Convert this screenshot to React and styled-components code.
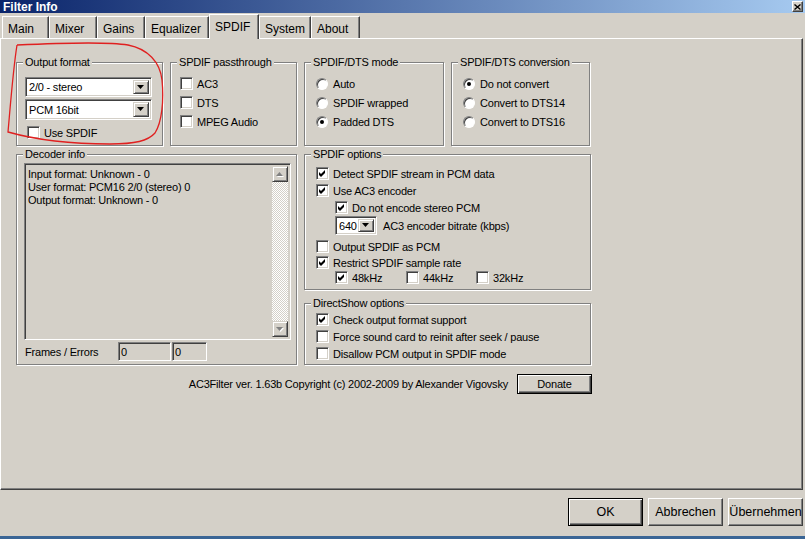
import React from 'react';
import styled, { createGlobalStyle } from 'styled-components';

const GlobalStyle = createGlobalStyle`
  html, body {
    margin: 0;
    padding: 0;
    background: #d4d0c8;
  }
  body {
    font-family: "Liberation Sans", Arial, sans-serif;
  }
`;

const Window = styled.div`
  position: relative;
  width: 805px;
  height: 539px;
  overflow: hidden;
  background: #d4d0c8;
  display: flex;
  flex-direction: column;
  font-family: "Liberation Sans", Arial, sans-serif;
  font-size: 11px;
  letter-spacing: -0.2px;
  color: #000;
`;

const TitleBar = styled.div`
  flex: none;
  height: 13px;
  display: flex;
  align-items: center;
  justify-content: space-between;
  padding: 0 2px 0 3px;
  background: linear-gradient(to right, #0a246a, #a6caf0);
  color: #fff;
  font-size: 12px;
  font-weight: bold;
  letter-spacing: 0;
`;

const CloseBtn = styled.span`
  box-sizing: border-box;
  width: 11px;
  height: 11px;
  background: #d4d0c8;
  border: 1px solid;
  border-color: #fff #404040 #404040 #fff;
  box-shadow: inset -1px -1px 0 #808080;
  display: flex;
  align-items: center;
  justify-content: center;
`;

const TabStrip = styled.div`
  flex: none;
  position: relative;
  z-index: 1;
  height: 25px;
  display: flex;
  align-items: flex-end;
  padding-left: 2px;
`;

const Tab = styled.div`
  box-sizing: border-box;
  width: ${p => p.w}px;
  height: ${p => (p.active ? 25 : 22)}px;
  margin-bottom: ${p => (p.active ? -1 : 0)}px;
  padding: ${p => (p.active ? 0 : 2)}px 0 0 5px;
  display: flex;
  align-items: center;
  background: #d4d0c8;
  border-top: 1px solid #fff;
  border-left: 1px solid #fff;
  border-right: 1px solid #404040;
  box-shadow: inset -1px 0 0 #808080;
  font-size: 12px;
  letter-spacing: 0;
  white-space: nowrap;
`;

const Panel = styled.div`
  flex: none;
  box-sizing: border-box;
  width: 803px;
  height: 452px;
  border-top: 1px solid #fff;
  border-left: 1px solid #fff;
  border-right: 1px solid #404040;
  border-bottom: 1px solid #404040;
  box-shadow: inset -1px -1px 0 #808080;
  padding: 23px 0 0 15px;
`;

const Row = styled.div`
  display: flex;
  align-items: flex-start;
  gap: ${p => p.gap || 0}px;
  margin-top: ${p => p.mt || 0}px;
`;

const Column = styled.div`
  display: flex;
  flex-direction: column;
  gap: ${p => p.gap || 0}px;
`;

const Group = styled.div`
  box-sizing: border-box;
  width: ${p => p.w}px;
  height: ${p => p.h}px;
  border: 1px solid #808080;
  box-shadow: inset 1px 1px 0 #fff, 1px 1px 0 #fff;
  display: flex;
  flex-direction: column;
`;

const Caption = styled.div`
  align-self: flex-start;
  height: 13px;
  line-height: 13px;
  margin: -7px 0 0 6px;
  padding: 0 2px;
  background: #d4d0c8;
  white-space: nowrap;
`;

const Body = styled.div`
  display: flex;
  flex-direction: column;
  align-items: flex-start;
  gap: ${p => p.gap || 0}px;
  padding: ${p => p.pad};
`;

const Line = styled.div`
  display: flex;
  align-items: center;
  gap: ${p => p.gap ?? 4}px;
  height: ${p => p.h || 13}px;
  width: ${p => (p.w ? `${p.w}px` : 'auto')};
  flex: none;
  margin-top: ${p => p.mt || 0}px;
  margin-left: ${p => p.ml || 0}px;
  white-space: nowrap;
`;

const Box = styled.span`
  box-sizing: border-box;
  display: block;
  flex: none;
  width: 13px;
  height: 13px;
  background: #fff;
  border: 1px solid;
  border-color: #808080 #fff #fff #808080;
  box-shadow: inset 1px 1px 0 #404040, inset -1px -1px 0 #d4d0c8;
`;

const RadioBall = styled.span`
  box-sizing: border-box;
  flex: none;
  width: 12px;
  height: 12px;
  border-radius: 50%;
  background: #fff;
  border: 1px solid;
  border-color: #808080 #fff #fff #808080;
  box-shadow: inset 1px 1px 0 #404040;
  display: flex;
  align-items: center;
  justify-content: center;

  &::after {
    content: '';
    width: 4px;
    height: 4px;
    border-radius: 50%;
    background: ${p => (p.checked ? '#000' : 'transparent')};
  }
`;

const Combo = styled.div`
  box-sizing: border-box;
  flex: none;
  width: ${p => p.w}px;
  height: ${p => p.h}px;
  padding: 2px;
  background: #fff;
  border: 1px solid;
  border-color: #808080 #fff #fff #808080;
  box-shadow: inset 1px 1px 0 #404040, inset -1px -1px 0 #d4d0c8;
  display: flex;
  align-items: center;
`;

const ComboText = styled.span`
  flex: 1;
  padding-left: 1px;
  white-space: nowrap;
`;

const DropBtn = styled.span`
  box-sizing: border-box;
  width: 16px;
  align-self: stretch;
  background: #d4d0c8;
  border: 1px solid;
  border-color: #d4d0c8 #404040 #404040 #d4d0c8;
  box-shadow: inset 1px 1px 0 #fff, inset -1px -1px 0 #808080;
  display: flex;
  align-items: center;
  justify-content: center;
`;

const InfoBox = styled.div`
  box-sizing: border-box;
  width: 267px;
  height: 177px;
  padding: 2px;
  border: 1px solid;
  border-color: #808080 #fff #fff #808080;
  box-shadow: inset 1px 1px 0 #404040, inset -1px -1px 0 #d4d0c8;
  display: flex;
`;

const InfoText = styled.div`
  flex: 1;
  padding: 2px 1px;
  line-height: 13px;
  white-space: nowrap;
`;

const ScrollBar = styled.div`
  width: 16px;
  display: flex;
  flex-direction: column;
`;

const ScrollBtn = styled.span`
  box-sizing: border-box;
  width: 16px;
  height: 16px;
  flex: none;
  background: #d4d0c8;
  border: 1px solid;
  border-color: #d4d0c8 #404040 #404040 #d4d0c8;
  box-shadow: inset 1px 1px 0 #fff, inset -1px -1px 0 #808080;
  display: flex;
  align-items: center;
  justify-content: center;
`;

const ScrollTrack = styled.span`
  flex: 1;
  background: repeating-conic-gradient(#fff 0% 25%, #d4d0c8 0% 50%) 0 0 / 2px 2px;
`;

const FieldLabel = styled.span`
  width: 93px;
  margin-left: 1px;
  white-space: nowrap;
`;

const Field = styled.div`
  box-sizing: border-box;
  width: ${p => p.w}px;
  height: 19px;
  margin-left: ${p => p.ml || 0}px;
  padding-left: 2px;
  background: #d4d0c8;
  border: 1px solid;
  border-color: #808080 #fff #fff #808080;
  box-shadow: inset 1px 1px 0 #404040, inset -1px -1px 0 #d4d0c8;
  display: flex;
  align-items: center;
`;

const Footer = styled.div`
  width: 576px;
  margin-top: 9px;
  display: flex;
  justify-content: flex-end;
  align-items: center;
  gap: 9px;
  white-space: nowrap;
`;

const Button = styled.button`
  box-sizing: border-box;
  width: ${p => p.w}px;
  height: ${p => p.h}px;
  padding: 0;
  overflow: hidden;
  display: flex;
  align-items: center;
  justify-content: center;
  white-space: nowrap;
  font-family: inherit;
  font-size: ${p => p.fs || 11}px;
  letter-spacing: ${p => (p.fs ? 0 : -0.2)}px;
  color: #000;
  background: #d4d0c8;
  border: 1px solid;
  border-color: ${p => (p.primary ? '#000' : '#fff #404040 #404040 #fff')};
  box-shadow: ${p =>
    p.primary
      ? 'inset 1px 1px 0 #fff, inset -1px -1px 0 #404040, inset -2px -2px 0 #808080'
      : 'inset -1px -1px 0 #808080'};
`;

const ButtonBar = styled.div`
  flex: none;
  margin-top: 8px;
  padding-right: 2px;
  display: flex;
  justify-content: flex-end;
  gap: 5px;
`;

const TaskLine = styled.div`
  flex: none;
  margin-top: auto;
  height: 3px;
  background: #3a6595;
`;

const Annotation = styled.svg`
  position: absolute;
  left: 0;
  top: 0;
  pointer-events: none;
`;

const CheckMark = () => (
  <svg width="11" height="11" viewBox="0 0 11 11" style={{ display: 'block' }}>
    <path d="M2 4 L4 6 L8 2 L8 5 L4 9 L2 7 Z" fill="#000" />
  </svg>
);

const Check = ({ checked, children, ...rest }) => (
  <Line {...rest}>
    <Box>{checked && <CheckMark />}</Box>
    <span>{children}</span>
  </Line>
);

const Radio = ({ checked, children, ...rest }) => (
  <Line gap={5} {...rest}>
    <RadioBall checked={checked} />
    <span>{children}</span>
  </Line>
);

const Arrow = ({ up, color = '#000', shadow }) => (
  <svg width="8" height="5" viewBox="0 0 8 5" style={{ display: 'block' }}>
    {shadow && <path d={up ? 'M4.5 1 L8 5 L1 5 Z' : 'M1 1 L8 1 L4.5 5 Z'} fill="#fff" />}
    <path d={up ? 'M3.5 0 L7 4 L0 4 Z' : 'M0 0 L7 0 L3.5 4 Z'} fill={color} />
  </svg>
);

const Select = ({ w, h, value }) => (
  <Combo w={w} h={h}>
    <ComboText>{value}</ComboText>
    <DropBtn>
      <Arrow />
    </DropBtn>
  </Combo>
);

const tabs = [
  ['Main', 47],
  ['Mixer', 48],
  ['Gains', 48],
  ['Equalizer', 64],
  ['SPDIF', 50],
  ['System', 52],
  ['About', 49],
];

export default function App() {
  return (
    <Window>
      <GlobalStyle />
      <TitleBar>
        <span>Filter Info</span>
        <CloseBtn>
          <svg width="7" height="6" viewBox="0 0 7 6">
            <path d="M0.5 0.5 L6.5 5.5 M6.5 0.5 L0.5 5.5" stroke="#000" strokeWidth="1.4" />
          </svg>
        </CloseBtn>
      </TitleBar>

      <TabStrip>
        {tabs.map(([name, w]) => (
          <Tab key={name} w={w} active={name === 'SPDIF'}>
            {name}
          </Tab>
        ))}
      </TabStrip>

      <Panel>
        <Row gap={7}>
          <Group w={147} h={84}>
            <Caption>Output format</Caption>
            <Body pad="8px 0 0 8px" gap={2}>
              <Select w={127} h={20} value="2/0 - stereo" />
              <Select w={127} h={21} value="PCM 16bit" />
              <Check mt={4} ml={2}>Use SPDIF</Check>
            </Body>
          </Group>

          <Group w={127} h={84}>
            <Caption>SPDIF passthrough</Caption>
            <Body pad="8px 0 0 9px" gap={6}>
              <Check>AC3</Check>
              <Check>DTS</Check>
              <Check>MPEG Audio</Check>
            </Body>
          </Group>

          <Group w={140} h={84}>
            <Caption>SPDIF/DTS mode</Caption>
            <Body pad="8px 0 0 11px" gap={6}>
              <Radio>Auto</Radio>
              <Radio>SPDIF wrapped</Radio>
              <Radio checked>Padded DTS</Radio>
            </Body>
          </Group>

          <Group w={139} h={84}>
            <Caption>SPDIF/DTS conversion</Caption>
            <Body pad="8px 0 0 11px" gap={6}>
              <Radio checked>Do not convert</Radio>
              <Radio>Convert to DTS14</Radio>
              <Radio>Convert to DTS16</Radio>
            </Body>
          </Group>
        </Row>

        <Row gap={7} mt={8}>
          <Group w={281} h={211}>
            <Caption>Decoder info</Caption>
            <Body pad="2px 0 0 7px">
              <InfoBox>
                <InfoText>
                  Input format: Unknown - 0
                  <br />
                  User format: PCM16 2/0 (stereo) 0
                  <br />
                  Output format: Unknown - 0
                </InfoText>
                <ScrollBar>
                  <ScrollBtn>
                    <Arrow up color="#808080" shadow />
                  </ScrollBtn>
                  <ScrollTrack />
                  <ScrollBtn>
                    <Arrow color="#808080" shadow />
                  </ScrollBtn>
                </ScrollBar>
              </InfoBox>
              <Line h={19} gap={0} mt={2}>
                <FieldLabel>Frames / Errors</FieldLabel>
                <Field w={53}>0</Field>
                <Field w={35} ml={1}>0</Field>
              </Line>
            </Body>
          </Group>

          <Column gap={13}>
            <Group w={287} h={136}>
              <Caption>SPDIF options</Caption>
              <Body pad="0 0 0 11px">
                <Check checked mt={6}>Detect SPDIF stream in PCM data</Check>
                <Check checked mt={4}>Use AC3 encoder</Check>
                <Check checked mt={4} ml={19}>Do not encode stereo PCM</Check>
                <Line h={19} gap={6} mt={2} ml={19}>
                  <Select w={42} h={19} value="640" />
                  <span>AC3 encoder bitrate (kbps)</span>
                </Line>
                <Check mt={5}>Output SPDIF as PCM</Check>
                <Check checked mt={3}>Restrict SPDIF sample rate</Check>
                <Line gap={0} mt={2} ml={19}>
                  <Check checked w={71}>48kHz</Check>
                  <Check w={70}>44kHz</Check>
                  <Check>32kHz</Check>
                </Line>
              </Body>
            </Group>

            <Group w={287} h={62}>
              <Caption>DirectShow options</Caption>
              <Body pad="0 0 0 11px">
                <Check checked mt={3}>Check output format support</Check>
                <Check mt={4}>Force sound card to reinit after seek / pause</Check>
                <Check mt={4}>Disallow PCM output in SPDIF mode</Check>
              </Body>
            </Group>
          </Column>
        </Row>

        <Footer>
          <span>AC3Filter ver. 1.63b Copyright (c) 2002-2009 by Alexander Vigovsky</span>
          <Button primary w={75} h={20}>Donate</Button>
        </Footer>
      </Panel>

      <ButtonBar>
        <Button primary w={75} h={28} fs={12.5}>
          <span>OK</span>
        </Button>
        <Button w={75} h={28} fs={12.5}>
          <span>Abbrechen</span>
        </Button>
        <Button w={75} h={28} fs={12.5}>
          <span>Übernehmen</span>
        </Button>
      </ButtonBar>

      <TaskLine />

      <Annotation width="805" height="539" viewBox="0 0 805 539">
        <path
          d="M17 45 C60 43 110 42 128 45 C148 49 160 62 162 80 C164 100 162 122 155 133 C148 141 135 144 110 144 C80 144 40 141 8 132 C10 110 13 70 17 45"
          fill="none"
          stroke="#e02020"
          strokeWidth="1.3"
        />
      </Annotation>
    </Window>
  );
}
